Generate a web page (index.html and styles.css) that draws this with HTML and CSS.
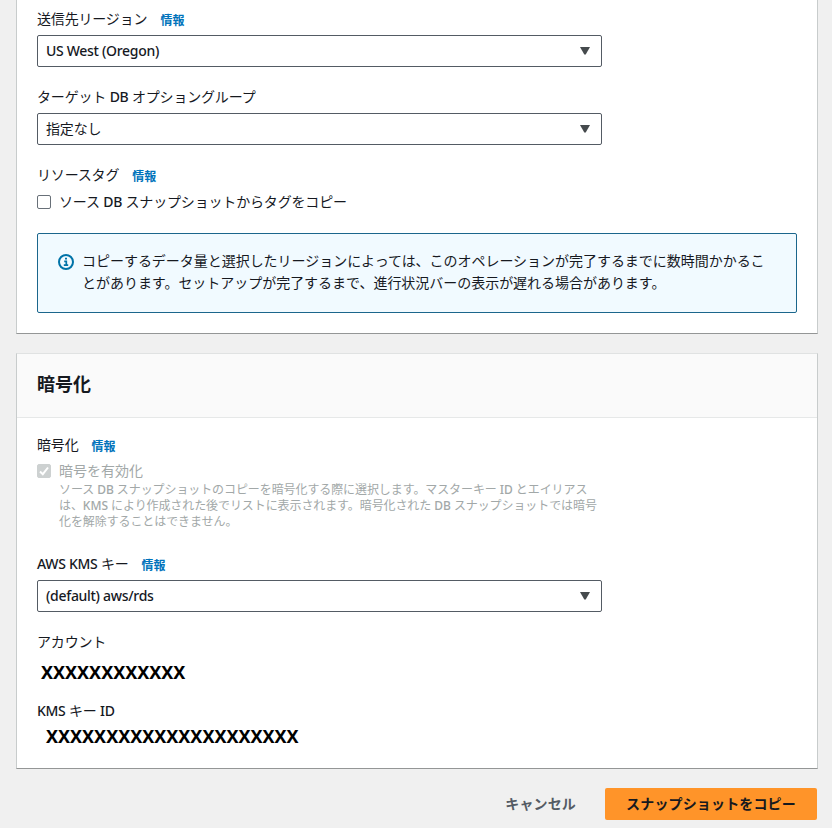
FILE: index.html
```html
<!DOCTYPE html>
<html lang="ja">
<head>
<meta charset="utf-8">
<title>スナップショットをコピー</title>
<link rel="stylesheet" href="styles.css">
</head>
<body>
<main class="page">
  <section class="panel panel-settings">
    <div class="field">
      <div class="label"><span>送信先リージョン</span><a class="info">情報</a></div>
      <div class="select"><span class="latin">US West (Oregon)</span><svg class="caret" viewBox="0 0 10 8"><path d="M0 0H10L6 7Q5 8.6 4 7Z"/></svg></div>
    </div>
    <div class="field">
      <div class="label"><span>ターゲット <span class="latin">DB</span> オプショングループ</span></div>
      <div class="select"><span>指定なし</span><svg class="caret" viewBox="0 0 10 8"><path d="M0 0H10L6 7Q5 8.6 4 7Z"/></svg></div>
    </div>
    <div class="field-tags">
      <div class="label"><span>リソースタグ</span><a class="info">情報</a></div>
      <div class="check-row"><span class="checkbox"></span><span>ソース <span class="latin">DB</span> スナップショットからタグをコピー</span></div>
    </div>
    <div class="alert">
      <svg class="alert-icon" viewBox="0 0 16 16"><circle cx="8" cy="8" r="7"/><path d="M6.2 7.3H8.3V11M5.8 11.2H10.2M7 4.6H9"/></svg>
      <p class="alert-text">コピーするデータ量と選択したリージョンによっては、このオペレーションが完了するまでに数時間かかるこ<br>とがあります。セットアップが完了するまで、進行状況バーの表示が遅れる場合があります。</p>
    </div>
  </section>
  <section class="panel panel-crypto">
    <header class="panel-header"><h2>暗号化</h2></header>
    <div class="panel-body">
      <div class="label"><span>暗号化</span><a class="info">情報</a></div>
      <div class="check-row disabled"><span class="checkbox checked"><svg viewBox="0 0 14 14"><path d="M3 7.5L5.8 10.2L11 3.5"/></svg></span><span>暗号を有効化</span></div>
      <p class="hint">ソース <span class="latin">DB</span> スナップショットのコピーを暗号化する際に選択します。マスターキー <span class="latin">ID</span> とエイリアス<br>は、<span class="latin">KMS</span> により作成された後でリストに表示されます。暗号化された <span class="latin">DB</span> スナップショットでは暗号<br>化を解除することはできません。</p>
      <div class="field field-key">
        <div class="label"><span><span class="latin">AWS KMS</span> キー</span><a class="info">情報</a></div>
        <div class="select"><span class="latin">(default) aws/rds</span><svg class="caret" viewBox="0 0 10 8"><path d="M0 0H10L6 7Q5 8.6 4 7Z"/></svg></div>
      </div>
      <div class="label"><span>アカウント</span></div>
      <div class="value value-account">XXXXXXXXXXXX</div>
      <div class="label"><span><span class="latin">KMS</span> キー <span class="latin">ID</span></span></div>
      <div class="value value-key">XXXXXXXXXXXXXXXXXXXXX</div>
    </div>
  </section>
  <footer class="actions">
    <button class="btn btn-link">キャンセル</button>
    <button class="btn btn-primary">スナップショットをコピー</button>
  </footer>
</main>
</body>
</html>
```
FILE: styles.css
```css
* { box-sizing: border-box; }
html { overflow: hidden; }
body {
  margin: 0;
  background: #f0f0f0;
  color: #16191f;
  font: 14px/22px "Noto Sans", "Noto Sans CJK JP", sans-serif;
  letter-spacing: -0.17px;
  white-space: nowrap;
}
.latin { font-weight: 500; letter-spacing: -0.3px; }
.page { width: 802px; height: 828px; margin-left: 16px; }
.panel {
  background: #fff;
  border: 1px solid #c8cccc;
  border-bottom-color: #949696;
}
.panel-settings { height: 334px; border-top: 0; padding: 8px 20px 20px; }
.panel-crypto { height: 416px; margin-top: 19px; border-top-color: #e0e2e2; }
.field { height: 78px; }
.label { display: flex; align-items: center; gap: 13px; height: 22px; }
.info { color: #0073bb; font-size: 12px; font-weight: 700; letter-spacing: 0; padding-top: 4px; }
.select {
  display: flex;
  align-items: center;
  justify-content: space-between;
  width: 565px;
  height: 32px;
  margin-top: 5px;
  padding: 0 11px 0 8px;
  border: 1px solid #545b64;
  border-radius: 2px;
}
.caret { width: 10px; height: 8px; fill: #454a4d; }
.check-row { display: flex; align-items: center; gap: 8px; height: 22px; margin-top: 5px; }
.checkbox { width: 14px; height: 14px; border: 1px solid #687078; border-radius: 2px; }
.alert {
  display: flex;
  gap: 8px;
  width: 760px;
  height: 80px;
  margin-top: 20px;
  padding: 16px 20px;
  background: #f1faff;
  border: 1px solid #1b668c;
  border-radius: 2px;
}
.alert-icon { width: 16px; height: 16px; margin-top: 4px; fill: none; stroke: #0073a8; stroke-width: 2; }
.alert-icon path { stroke-width: 1.7; }
.alert-text { margin: 0; letter-spacing: -0.03px; }
.panel-header {
  display: flex;
  align-items: center;
  height: 64px;
  padding: 0 20px 4px;
  background: #fafafa;
  border-bottom: 1px solid #e6e8e8;
}
h2 { margin: 0; font-size: 18px; line-height: 22px; letter-spacing: 0; }
.panel-body { padding: 16px 20px 0; }
.panel-body .check-row { margin-top: 4px; }
.disabled { color: #a2a8a8; letter-spacing: 0; }
.checked { background: #cdd1d1; border-color: #cdd1d1; }
.checked svg { display: block; width: 14px; height: 14px; margin: -1px; fill: none; stroke: #fff; stroke-width: 2; }
.hint { margin: 0 0 23px 22px; color: #a2a8a8; font-size: 12px; line-height: 16px; letter-spacing: -0.09px; }
.hint .latin { letter-spacing: 0; }
.value { height: 28px; color: #000; font: 700 18px/28px "Noto Sans", sans-serif; letter-spacing: -0.03px; }
.value-account { margin: 5px 0 14px 4px; }
.value-key { margin-left: 9px; }
.actions { display: flex; justify-content: flex-end; gap: 29px; margin: 19px 1px 0 0; }
.btn {
  height: 32px;
  padding: 0;
  border: 0;
  border-radius: 2px;
  background: none;
  color: #545b64;
  font: 700 14px/22px "Noto Sans", "Noto Sans CJK JP", sans-serif;
  letter-spacing: 0.15px;
}
.btn-primary { width: 212px; background: #ff9429; color: #16191f; }
```
